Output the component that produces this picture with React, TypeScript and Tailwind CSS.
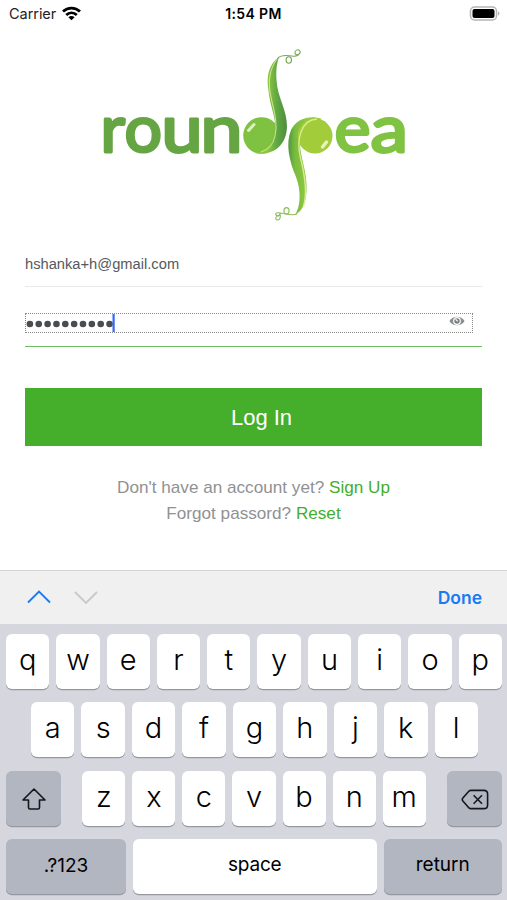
import type { ReactNode } from "react";

function StatusBar() {
  return (
    <header className="grid h-7 grid-cols-3 items-center pl-[9px] pr-[7px] text-[14.5px] leading-none text-[#222]">
      <div className="flex items-center gap-1.5">
        <span className="tracking-[-0.05px]">Carrier</span>
        <svg className="-mt-[2px]" width="19" height="15" viewBox="0 0 19 15" fill="none" stroke="#000" strokeWidth="2.8">
          <path d="M1 5.6C5.8 .9 13.2 .9 18 5.6" />
          <path d="M4.2 9C7.3 6.1 11.7 6.1 14.8 9" />
          <path d="M9.5 14.2 6.4 11.2C8.2 9.5 10.8 9.5 12.6 11.2Z" fill="#000" stroke="none" />
        </svg>
      </div>
      <span className="-ml-[2px] text-center text-[14px] font-semibold tracking-[0.35px] text-black">1:54 PM</span>
      <svg className="-mt-[2px] justify-self-end" width="31" height="15" viewBox="0 0 31 15">
        <rect x="1.5" y="1" width="26" height="13" rx="4" fill="#fff" stroke="#b5b5b5" strokeWidth="1.5" />
        <rect x="3.5" y="3" width="22" height="9" rx="2" fill="#000" />
        <path d="M29 5.3Q32 7.5 29 9.7Z" fill="#b5b5b5" />
      </svg>
    </header>
  );
}

function Logo() {
  return (
    <svg className="block" width="507" height="190" viewBox="0 40 507 190" role="img" aria-label="roundpea">
      <defs>
        <linearGradient id="podD" x1="268" y1="0" x2="287" y2="0" gradientUnits="userSpaceOnUse">
          <stop offset="0" stopColor="#8dc63f" />
          <stop offset=".45" stopColor="#62a843" />
          <stop offset="1" stopColor="#4b8e3c" />
        </linearGradient>
        <linearGradient id="podP" x1="288" y1="0" x2="308" y2="0" gradientUnits="userSpaceOnUse">
          <stop offset="0" stopColor="#4f963c" />
          <stop offset=".35" stopColor="#7abc40" />
          <stop offset="1" stopColor="#91cb3f" />
        </linearGradient>
      </defs>
      <g fontFamily="Lato, sans-serif" fontWeight="400" fontSize="66" strokeWidth="2.9" strokeLinejoin="round">
        <g fill="#66a543" stroke="#66a543">
          <text x="100.5" y="152.3" textLength="24.500" lengthAdjust="spacingAndGlyphs">r</text>
          <text x="124.500" y="152.3" textLength="37.500" lengthAdjust="spacingAndGlyphs">o</text>
          <text x="161.500" y="152.3" textLength="41" lengthAdjust="spacingAndGlyphs">u</text>
          <text x="200.5" y="152.3" textLength="42" lengthAdjust="spacingAndGlyphs">n</text>
        </g>
        <g fill="#80c342" stroke="#80c342">
          <text x="334.500" y="152.3" textLength="36" lengthAdjust="spacingAndGlyphs">e</text>
          <text x="370.500" y="152.3" textLength="37.500" lengthAdjust="spacingAndGlyphs">a</text>
        </g>
      </g>

      {/* left pea and its pod, shaped like a d */}
      <circle cx="261.5" cy="135.5" r="18.3" fill="#7fc241" />
      <path d="M279 57C269 64 266 76 268.5 91C270 107 277 119 275 132C273 144 266 151 255 153C272 156 286 147 287 127C287 109 277.5 98 276.500 80C276 70 276.5 64 279 57Z" fill="url(#podD)" />
      <path d="M277 59C269 70 267.5 82 271 97C274 112 278 123 275 136C273 145 268 150 261 152" fill="none" stroke="#c9e58a" strokeWidth="1.1" />
      <path d="M248.5 130.5L254 124.5" stroke="#ddf0c6" strokeWidth="3" strokeLinecap="round" />
      <path d="M278 58C282 54 287 55.500 292 56C297 57 301 54 300 51C298 48.500 294.500 50.500 295 53C295.500 55 298 55.500 299.500 53.500" fill="none" stroke="#76aa57" strokeWidth="1.1" />
      <ellipse cx="288.800" cy="60" rx="2.700" ry="3.200" fill="none" stroke="#76aa57" strokeWidth="1.1" />

      {/* right pea and its pod, shaped like a p */}
      <path d="M295 215C301 206 301 190 296 177C289 160 285.500 144 291 130C297 118 311 115 322 119C311 123 302 126 300 137C298 153 308 171 306.5 192C305.500 204 302 211 295 215Z" fill="url(#podP)" />
      <circle cx="315" cy="136" r="17.5" fill="#a2cc39" />
      <path d="M303.500 206C308 192 304.500 174 300.500 158C296 139 301 120 317 119" fill="none" stroke="#d8ec8e" strokeWidth="1.4" />
      <path d="M322.5 147L326.5 142" stroke="#e8f4bb" strokeWidth="3.5" strokeLinecap="round" />
      <path d="M297 214C292 216 287 214 283 213.500C277 212 274.500 213 276 215C278 217 281 215 279.500 212.500M280.500 214.500C276 215.500 274.500 219 277 220C280 220.500 281 217 280 214" fill="none" stroke="#8cbe5d" strokeWidth="1.1" />
      <ellipse cx="286.500" cy="210.800" rx="2.600" ry="3.200" fill="none" stroke="#8cbe5d" strokeWidth="1.1" />
    </svg>
  );
}

function LoginForm() {
  return (
    <form className="px-[25px] font-['Liberation_Sans',Arial,sans-serif]">
      <div className="flex h-[57px] items-center border-b border-[#e9e9eb] pt-[12px] text-[14.7px] text-[#55595c]">hshanka+h@gmail.com</div>
      <div className="h-[60px] border-b-[1.5px] border-[#6dbc62] pt-[26px] pr-[9px]">
        <div className="flex h-[20px] items-center justify-between border border-dotted border-[#888] pr-[7px]">
          <svg width="90" height="18" viewBox="0 0 90 18">
            {Array.from({ length: 10 }, (_, i) => (
              <circle key={i} cx={3.9 + i * 8.85} cy="10" r="3.3" fill="#494d50" />
            ))}
            <rect x="86.500" width="2.200" height="18" fill="#3569f4" />
          </svg>
          <svg className="-mt-[4px]" width="16" height="10" viewBox="0 0 16 10">
            <path d="M.4 5C3.7-.8 12.3-.8 15.6 5C12.3 10.8 3.7 10.8 .4 5Z" fill="#8b8e90" />
            <circle cx="8" cy="5" r="3.9" fill="#fff" />
            <circle cx="8" cy="5" r="2.7" fill="#7c7f82" />
            <path d="M6.6 3.2 8.6 5.4" fill="none" stroke="#fff" strokeWidth="1.2" />
          </svg>
        </div>
      </div>
      <button type="button" className="mt-[41px] block h-[58px] w-full bg-[#45af2c] pl-[16px] text-[22px] text-white">Log In</button>
      <div className="mt-[28px] text-center text-[17.15px] leading-[26px] text-[#8f9194]">
        <p>Don't have an account yet? <span className="text-[#43ae2c]">Sign Up</span></p>
        <p>Forgot passord? <span className="text-[#43ae2c]">Reset</span></p>
      </div>
    </form>
  );
}

function Key({ children, className = "flex-1 bg-white" }: { children: ReactNode; className?: string }) {
  return (
    <button type="button" className={`flex h-[55px] items-center justify-center rounded-[6px] text-black shadow-[0_1.3px_0_#9799a0] ${className}`}>
      {children}
    </button>
  );
}

function Letters({ row }: { row: string }) {
  return row.split("").map((letter) => (
    <Key key={letter}><span className="-mt-[4px] text-[29px] font-[350] leading-none">{letter}</span></Key>
  ));
}

function Keyboard() {
  return (
    <section className="flex h-[330px] flex-col border-t border-[#d4d4d6] bg-[#d6d7de]">
      <div className="flex h-[53px] items-center justify-between bg-[#f0f0f1] pl-[27px] pr-[25px]">
        <svg className="-mt-[2px]" width="72" height="18" viewBox="0 0 72 18" fill="none" strokeWidth="1.9">
          <path d="M1 14.5 12 3.500 23 14.5" stroke="#187bf4" />
          <path d="M48 4 59 15 70 4" stroke="#c9c9cb" />
        </svg>
        <span className="pt-0.5 text-[17.5px] font-semibold text-[#187bf4]">Done</span>
      </div>
      <div className="flex flex-col gap-[13.5px] pl-[6px] pr-[5px] pt-[9.5px]">
        <div className="flex gap-[7px]"><Letters row="qwertyuiop" /></div>
        <div className="flex gap-[7px] pl-[25px] pr-[24px]"><Letters row="asdfghjkl" /></div>
        <div className="flex justify-between">
          <Key className="w-[55px] bg-[#b2b6c1]">
            <svg className="mt-[2px]" width="26" height="24" viewBox="0 0 26 24" fill="none" stroke="#15171b" strokeWidth="1.6" strokeLinejoin="round">
              <path d="M13 2 24 13H18.5V20.5Q18.5 22 17 22H9Q7.5 22 7.5 20.5V13H2Z" />
            </svg>
          </Key>
          <div className="flex w-[343.5px] gap-[7px]"><Letters row="zxcvbnm" /></div>
          <Key className="w-[55px] bg-[#b2b6c1]">
            <svg className="mt-[2px]" width="28" height="21" viewBox="0 0 30 22" fill="none" stroke="#15171b" strokeWidth="1.7" strokeLinejoin="round">
              <path d="M10.500 1.200H24.500Q28.500 1.200 28.500 5.200V16.800Q28.500 20.800 24.500 20.800H10.500Q9.500 20.800 8.600 20L2 12.500Q.7 11 2 9.500L8.600 2Q9.500 1.200 10.500 1.200Z" />
              <path d="M13.500 6.500 22.500 15.500M22.500 6.500 13.500 15.500" />
            </svg>
          </Key>
        </div>
        <div className="flex gap-[7px] text-[19px]">
          <Key className="w-[120px] bg-[#b2b6c1]">.?123</Key>
          <Key><span className="-mt-[3px] tracking-[-0.2px]">space</span></Key>
          <Key className="w-[118.5px] bg-[#b2b6c1]"><span className="-mt-[3px]">return</span></Key>
        </div>
      </div>
    </section>
  );
}

export default function App() {
  return (
    <main className="flex h-[900px] w-[507px] flex-col overflow-hidden bg-white font-[Inter,sans-serif]">
      <StatusBar />
      <div className="flex-1 pt-[12px]">
        <Logo />
        <LoginForm />
      </div>
      <Keyboard />
    </main>
  );
}
